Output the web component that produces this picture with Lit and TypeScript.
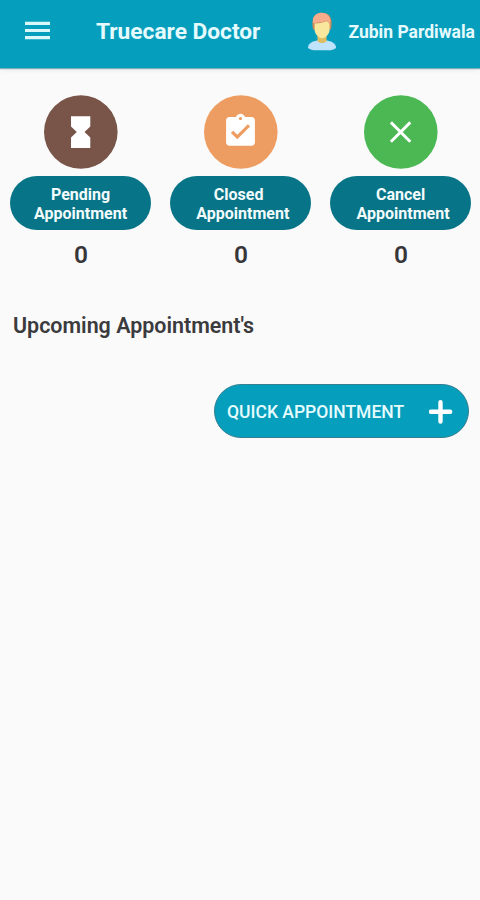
import { LitElement, html, css, svg } from "lit";
import { customElement, property } from "lit/decorators.js";

const hourglass = svg`<path d="M71 116.300h19.300v10.200l-5.800 5.500 5.800 5.600v10.300H71v-10.300l5.800-5.600-5.800-5.500z" transform="translate(-44 -95)" fill="#fff"/>`;
const clipboard = svg`<path transform="translate(17.300 17.100) scale(1.600)" fill="#fff" fill-rule="evenodd" d="M19 3h-4.180C14.400 1.840 13.300 1 12 1c-1.300 0-2.400.84-2.820 2H5c-1.100 0-2 .9-2 2v14c0 1.100.9 2 2 2h14c1.100 0 2-.9 2-2V5c0-1.100-.9-2-2-2zm-7 0c.55 0 1 .45 1 1s-.45 1-1 1-1-.45-1-1 .45-1 1-1zM10 17l-4-4 1.410-1.410L10 14.170l6.590-6.590L18 9z"/>`;
const cross = svg`<path d="M26.900 27.400l19.400 19.400M46.300 27.400L26.900 46.800" stroke="#fff" stroke-width="2.900" fill="none"/>`;

@customElement("stat-card")
class StatCard extends LitElement {
  @property() label = "";
  @property() color = "";
  @property({ type: Number }) count = 0;
  @property({ attribute: false }) icon: unknown;

  static styles = css`
    :host { display: flex; flex-direction: column; align-items: center; width: 160px; }
    .icon { display: block; width: 74px; height: 74px; }
    .pill {
      box-sizing: border-box; width: 141px; height: 54px; margin-top: 7px;
      border-radius: 27px; background: #087487; color: #f3fcfd;
      display: flex; flex-direction: column; align-items: center; justify-content: center;
      font-size: 16px; line-height: 19px; font-weight: 700; padding-top: 2px;
    }
    .first { margin-right: var(--first-inset, 0); }
    .second { margin-left: var(--second-inset, 0); }
    .count { margin: 10px 0 0 1px; font-size: 24.500px; line-height: 30px; font-weight: 600; color: #37373a; }
  `;

  render() {
    return html`
      <svg class="icon" viewBox="0 0 74 74">
        <circle cx="36.800" cy="37" r="36.800" fill=${this.color} />
        ${this.icon}
      </svg>
      <div class="pill">
        <span class="first">${this.label}</span>
        <span class="second">Appointment</span>
      </div>
      <div class="count">${this.count}</div>
    `;
  }
}

@customElement("app-root")
class AppRoot extends LitElement {
  static styles = css`
    :host {
      display: block; height: 900px; background: #fafafa; overflow: hidden;
      font-family: Roboto, "Liberation Sans", sans-serif; color: #3b3b3e;
    }
    .bar {
      display: flex; align-items: center; box-sizing: border-box; height: 68px;
      padding: 0 0 5px 24.5px; background: #059fbd; color: #e6fbfd;
      box-shadow: 0 1px 1px rgba(5, 110, 130, .5), 0 2px 5px rgba(0, 0, 0, .07);
    }
    .menu { width: 25px; height: 20px; flex: none; margin-top: -2px; }
    .title { margin-left: 46.500px; width: 211px; font-size: 22.700px; font-weight: 700; white-space: nowrap; }
    .avatar { width: 30px; height: 40px; flex: none; }
    .name { margin-left: 11.500px; font-size: 17.500px; font-weight: 700; white-space: nowrap; }
    .stats { display: flex; padding: 27px 0 0 .6px; margin-right: -1px; }
    .closed { --first-inset: 4px; --second-inset: 4.500px; }
    .cancel { --second-inset: 5px; }
    .heading { margin: 42px 0 0 13px; font-size: 21.450px; line-height: 28px; font-weight: 600; }
    .quick {
      display: flex; align-items: center; box-sizing: border-box; width: 255px; height: 54px;
      margin: 44px 0 0 213.500px; padding: 1px 15px 0 12.500px; justify-content: space-between;
      border: 1px solid #357f91; border-radius: 27px; background: #059fbd; color: #e6fbfd;
      font-size: 17.500px; font-weight: 500; white-space: nowrap;
    }
    .plus { width: 24px; height: 24px; }
  `;

  render() {
    return html`
      <header class="bar">
        <svg class="menu" viewBox="0 0 25 20">
          <path d="M0 2.300h25M0 9.500h25M0 16.600h25" stroke="#d9f8fb" stroke-width="3.200" />
        </svg>
        <div class="title">Truecare Doctor</div>
        <svg class="avatar" viewBox="0 0 30 40">
          <path d="M1 36c0-5 4.500-6.800 10-7.800h8c5.500 1 10 2.800 10 7.800-2 1.600-4.500 2.300-8 2.300H9c-3.500 0-6-.7-8-2.300z" fill="#bfe3fb" />
          <path d="M10.500 23h9v6.200c-2 2.400-7 2.400-9 0z" fill="#dfbd62" />
          <path d="M6 17.500C4 7 6.500 1 15 .8 23.500 1 26 7 24 17.500z" fill="#c98a5c" />
          <path d="M7.600 11.500c5-.2 9-1.400 12-2.600l3 2.600v6c0 4.500-4 8.700-7.500 8.700s-7.500-4.200-7.500-8.700z" fill="#f9e79d" />
          <path d="M6.500 11.500C4.500 5.500 8.500 1 14 .8c6-.3 10.500 4 9.200 10.500-1.500-.6-2.600-1.600-3.600-2.800-4 2.300-8.600 1.600-13.100 3z" fill="#f7ad8c" />
        </svg>
        <div class="name">Zubin Pardiwala</div>
      </header>
      <section class="stats">
        <stat-card label="Pending" color="#785548" .icon=${hourglass}></stat-card>
        <stat-card class="closed" label="Closed" color="#ee9d62" .icon=${clipboard}></stat-card>
        <stat-card class="cancel" label="Cancel" color="#4bb853" .icon=${cross}></stat-card>
      </section>
      <div class="heading">Upcoming Appointment's</div>
      <div class="quick">
        <span>QUICK APPOINTMENT</span>
        <svg class="plus" viewBox="0 0 24 24">
          <path d="M11.500 2.200v19.300M1.900 11.800h19.300" stroke="#fff" stroke-width="4.400" stroke-linecap="round" />
        </svg>
      </div>
    `;
  }
}
